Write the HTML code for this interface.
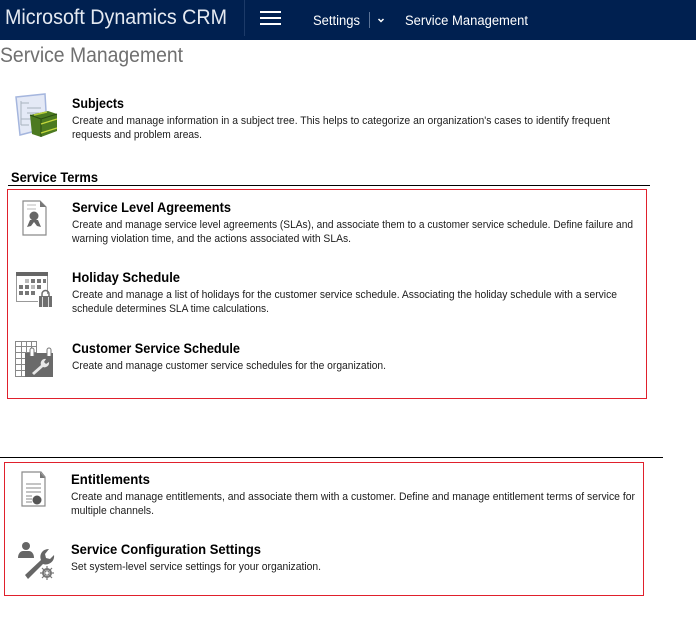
<!DOCTYPE html>
<html><head><meta charset="utf-8"><style>
html,body{margin:0;padding:0;background:#fff;width:696px;height:620px;overflow:hidden}
svg{display:block}
text{font-family:"Liberation Sans","DejaVu Sans",sans-serif}
.h{font-size:14px;font-weight:bold;fill:#000}
.d{font-size:11px;fill:#1c1c1c}
.n{fill:#fff}
.i{filter:blur(.35px)}
</style></head><body>
<svg width="696" height="620" viewBox="0 0 696 620" xmlns="http://www.w3.org/2000/svg">
<rect width="696" height="40" fill="#002050"/>
<rect x="244" y="0" width="1" height="36" fill="#1c3a68"/>
<text x="5" y="24" font-size="21" style="fill:#e4e9f1" textLength="222" lengthAdjust="spacingAndGlyphs">Microsoft Dynamics CRM</text>
<rect x="260" y="11" width="21" height="2" fill="#fff"/><rect x="260" y="17" width="21" height="2" fill="#fff"/><rect x="260" y="23" width="21" height="2" fill="#fff"/>
<text class="n" x="313" y="25" font-size="13.500" textLength="47" lengthAdjust="spacingAndGlyphs">Settings</text>
<rect x="369" y="12" width="1" height="16" fill="#5a7296"/>
<path d="M378.500 19l2.500 2.500 2.500-2.500" fill="none" stroke="#fff" stroke-width="1.500"/>
<text class="n" x="405" y="25" font-size="13.500" textLength="123" lengthAdjust="spacingAndGlyphs">Service Management</text>

<text x="0" y="62" font-size="21" style="fill:#707070" textLength="183" lengthAdjust="spacingAndGlyphs">Service Management</text>

<!-- Subjects icon -->
<g class="i">
<path d="M16 97l29-3 2 34-27 7z" fill="#e4e9f6" stroke="#a5b6de" stroke-width="1.500"/>
<path d="M21 101v24M21 103h8M27 108h14M27 113h12M21 119h12M21 125h8" stroke="#a9b2bf" fill="none"/>
<path d="M30 115l18-4 9 3v17l-16 6-9-3z" fill="#4c7a20"/>
<path d="M30 115l11 4 16-5M41 119v18" fill="none" stroke="#2a4c12"/>
<path d="M41 124l16-5M41 133l16-5" stroke="#c5d83c" stroke-width="1.200"/>
<path d="M34 115l13-3" stroke="#b8cf3a" stroke-width="1.500"/>
</g>

<text class="h" x="72" y="108" textLength="52" lengthAdjust="spacingAndGlyphs">Subjects</text>
<text class="d" x="72" y="124" textLength="538" lengthAdjust="spacingAndGlyphs">Create and manage information in a subject tree. This helps to categorize an organization's cases to identify frequent</text>
<text class="d" x="72" y="138" textLength="130" lengthAdjust="spacingAndGlyphs">requests and problem areas.</text>

<text class="h" x="11" y="182" textLength="87" lengthAdjust="spacingAndGlyphs">Service Terms</text>
<rect x="8" y="185" width="642" height="1" fill="#000"/>
<rect x="7.500" y="189.500" width="639" height="209" fill="none" stroke="#e0202c"/>

<!-- Certificate icon -->
<g class="i">
<path d="M23 201h17l6 6v28H23z" fill="#fff" stroke="#8a8a8a" stroke-width="1.200"/>
<path d="M40 201l6 6h-6z" fill="#777"/>
<path d="M27 205h9M27 209h9" stroke="#bbb"/>
<circle cx="34" cy="216" r="4.500" fill="#666"/>
<path d="M30 220l-3 7 4-1 3-4 3 4 4 1-3-7z" fill="#666"/>
</g>

<text class="h" x="72" y="212" textLength="159" lengthAdjust="spacingAndGlyphs">Service Level Agreements</text>
<text class="d" x="72" y="228" textLength="561" lengthAdjust="spacingAndGlyphs">Create and manage service level agreements (SLAs), and associate them to a customer service schedule. Define failure and</text>
<text class="d" x="72" y="242" textLength="279" lengthAdjust="spacingAndGlyphs">warning violation time, and the actions associated with SLAs.</text>

<!-- Calendar icon -->
<g class="i">
<rect x="16.500" y="272.500" width="31" height="29" fill="#fff" stroke="#999"/>
<rect x="16" y="272" width="32" height="4" fill="#666"/>
<g fill="#bbb"><rect x="25" y="279" width="4" height="4"/><rect x="19" y="285" width="4" height="4" fill="#777"/><rect x="25" y="285" width="4" height="4" fill="#777"/><rect x="31" y="285" width="4" height="4"/><rect x="19" y="291" width="4" height="4" fill="#777"/><rect x="25" y="291" width="4" height="4" fill="#777"/><rect x="31" y="291" width="4" height="4" fill="#777"/></g>
<g fill="#777"><rect x="31" y="279" width="4" height="4"/><rect x="37" y="279" width="4" height="4"/><rect x="43" y="279" width="3" height="4"/><rect x="37" y="285" width="4" height="4"/></g>
<path d="M38 294h15v13H38z" fill="#fff"/>
<path d="M39 296h13v11H39z" fill="#6e6e6e"/>
<path d="M42 296v-2a3.500 3.500 0 0 1 7 0v2" fill="none" stroke="#6e6e6e" stroke-width="1.500"/>
<path d="M42.500 297v10M48.500 297v10" stroke="#ddd"/>
</g>

<text class="h" x="72" y="282" textLength="108" lengthAdjust="spacingAndGlyphs">Holiday Schedule</text>
<text class="d" x="72" y="298" textLength="545" lengthAdjust="spacingAndGlyphs">Create and manage a list of holidays for the customer service schedule. Associating the holiday schedule with a service</text>
<text class="d" x="72" y="312" textLength="197" lengthAdjust="spacingAndGlyphs">schedule determines SLA time calculations.</text>

<!-- Schedule icon -->
<g class="i">
<path d="M15.500 341.500h21M15.500 346.500h21M15.500 352.500h21M15.500 358.500h10M15.500 364.500h10M15.500 370.500h10M15.500 376.500h10M15.500 341v36M21.500 341v36M26.500 341v36M31.500 341v12M36.500 341v12" stroke="#888" fill="none"/>
<rect x="25" y="353" width="28" height="24" fill="#6a6a6a"/>
<path d="M30 356v-6a2 2 0 0 1 4 0v6M47 356v-6a2 2 0 0 1 4 0v6" fill="#fff" stroke="#777"/>
<path d="M32 373l9-8a4.500 4.500 0 0 1 5-6l-2 3 2 2 3-2a4.500 4.500 0 0 1-6 5l-9 8z" fill="#e8e8e8"/>
</g>

<text class="h" x="72" y="353" textLength="168" lengthAdjust="spacingAndGlyphs">Customer Service Schedule</text>
<text class="d" x="72" y="369" textLength="314" lengthAdjust="spacingAndGlyphs">Create and manage customer service schedules for the organization.</text>

<rect x="0" y="457" width="663" height="1" fill="#000"/>
<rect x="4.500" y="462.500" width="639" height="133" fill="none" stroke="#e0202c"/>

<!-- Entitlements icon -->
<g class="i">
<path d="M22 472h19l4 5v29H22z" fill="#fff" stroke="#8a8a8a" stroke-width="1.200"/>
<path d="M40 472l5 6h-5z" fill="#777"/>
<path d="M26 484h15M26 488h15M26 492h15M26 496h6M26 499h6M26 502h6" stroke="#888"/>
<circle cx="37" cy="500" r="4.500" fill="#555"/>
</g>

<text class="h" x="71" y="484" textLength="79" lengthAdjust="spacingAndGlyphs">Entitlements</text>
<text class="d" x="71" y="500" textLength="564" lengthAdjust="spacingAndGlyphs">Create and manage entitlements, and associate them with a customer. Define and manage entitlement terms of service for</text>
<text class="d" x="71" y="514" textLength="83" lengthAdjust="spacingAndGlyphs">multiple channels.</text>

<!-- Service config icon -->
<g class="i">
<circle cx="26" cy="546" r="4" fill="#666"/>
<path d="M18 558c0-5 3-7 5-7h6c2 0 5 2 5 7z" fill="#666"/>
<path d="M25 575l16-15c-2-5 1-11 8-11l-4 5 1 4 4 1 4-4c1 6-5 11-11 9l-15 15z" fill="#666"/>
<circle cx="47" cy="573" r="4" fill="none" stroke="#777" stroke-width="2"/>
<path d="M47 566v14M40 573h14M42 568l10 10M52 568l-10 10" stroke="#777" stroke-width="1.200"/>
<circle cx="47" cy="573" r="1.500" fill="#fff"/>
</g>

<text class="h" x="71" y="554" textLength="190" lengthAdjust="spacingAndGlyphs">Service Configuration Settings</text>
<text class="d" x="71" y="570" textLength="250" lengthAdjust="spacingAndGlyphs">Set system-level service settings for your organization.</text>
</svg>
</body></html>
